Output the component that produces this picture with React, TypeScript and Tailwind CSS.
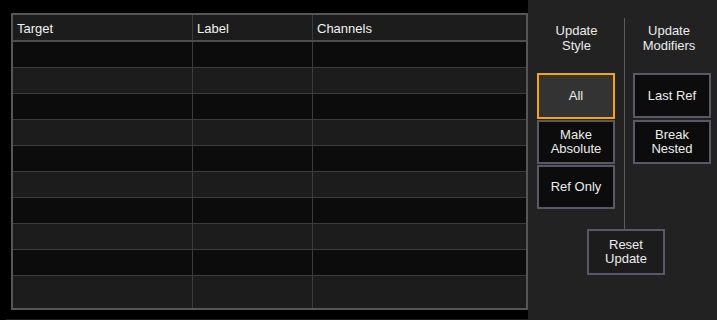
import React from "react";

const rows = Array.from({ length: 10 }, (_, i) => i);

function Btn({
  children,
  active,
  h,
}: {
  children: React.ReactNode;
  active?: boolean;
  h: string;
}) {
  return (
    <div
      className={
        "w-[78px] flex items-center justify-center text-center leading-[14px] text-[13px] text-[#ececec] border-2 " +
        h +
        " " +
        (active ? "border-[#f5a50f] bg-[#333333]" : "border-[#5a5766] bg-[#0c0c0c]")
      }
    >
      <span>{children}</span>
    </div>
  );
}

export default function App() {
  return (
    <div
      className="w-[717px] h-[320px] flex bg-black overflow-hidden"
      style={{ fontFamily: '"Liberation Sans", Arial, sans-serif' }}
    >
      {/* Left: table */}
      <div className="w-[528px] h-[320px] flex flex-col bg-black">
        <div className="ml-[11px] mt-[13px] w-[517px] border-2 border-[#565656] flex flex-col">
          <div className="flex h-[27px] bg-[#1c1c1c] border-b-2 border-[#4e4e4e] text-[13px] text-[#f2f2f2]">
            <div className="w-[180px] border-r border-[#3c3c3c] pl-[4px] pt-[3px] flex items-center">Target</div>
            <div className="w-[120px] border-r border-[#3c3c3c] pl-[4px] pt-[3px] flex items-center">Label</div>
            <div className="flex-1 pl-[4px] pt-[3px] flex items-center">Channels</div>
          </div>
          {rows.map((i) => (
            <div
              key={i}
              className={
                "flex " +
                (i === 9 ? "h-[32px] " : "h-[26px] border-b border-[#3c3c3c] ") +
                (i % 2 === 0 ? "bg-[#0c0c0c]" : "bg-[#1c1c1c]")
              }
            >
              <div className="w-[180px] border-r border-[#3c3c3c]" />
              <div className="w-[120px] border-r border-[#3c3c3c]" />
              <div className="flex-1" />
            </div>
          ))}
        </div>
        <div className="ml-[6px] mt-[9px] h-px bg-[#1e1e1e]" />
      </div>

      {/* Right: panel */}
      <div className="w-[189px] h-[320px] bg-[#222222] flex flex-col text-[#ececec]">
        <div className="flex pt-[18px] h-[229px]">
          <div className="w-[96px] flex flex-col">
            <div className="mt-[5px] text-center text-[13px] leading-[15px] pl-[1px]">
              Update
              <br />
              Style
            </div>
            <div className="mt-[20px] pl-[9px] flex flex-col gap-[1px]">
              <Btn active h="h-[46px]">All</Btn>
              <Btn h="h-[44px]">
                Make
                <br />
                Absolute
              </Btn>
              <Btn h="h-[44px]">Ref Only</Btn>
            </div>
          </div>
          <div className="w-px bg-[#5a5a5a]" />
          <div className="flex-1 flex flex-col">
            <div className="mt-[5px] text-center text-[13px] leading-[15px] pr-[4px]">
              Update
              <br />
              Modifiers
            </div>
            <div className="mt-[20px] pl-[8px] flex flex-col gap-[2px]">
              <Btn h="h-[45px]">Last Ref</Btn>
              <Btn h="h-[44px]">
                Break
                <br />
                Nested
              </Btn>
            </div>
          </div>
        </div>
        <div className="ml-[59px] w-[78px] h-[46px] border-2 border-[#5a5766] bg-[#1c1c1c] flex items-center justify-center text-center text-[13px] leading-[14px]">
          <span>
            Reset
            <br />
            Update
          </span>
        </div>
      </div>
    </div>
  );
}
